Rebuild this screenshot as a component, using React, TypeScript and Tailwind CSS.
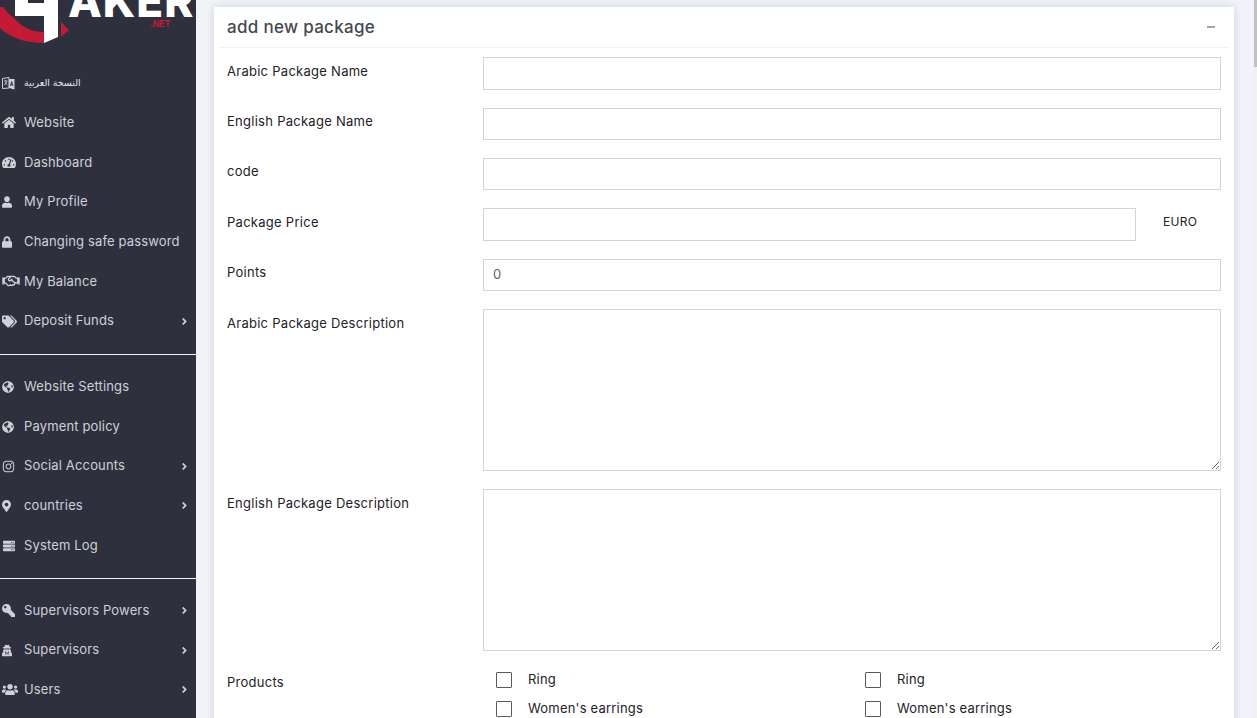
import React from 'react';
import {
  FaAngleRight,
  FaGlobeAmericas,
  FaHome,
  FaInstagram,
  FaKey,
  FaLock,
  FaMapMarkerAlt,
  FaRegHandshake,
  FaServer,
  FaTachometerAlt,
  FaTags,
  FaUser,
  FaUserSecret,
  FaUsers,
} from 'react-icons/fa';

const font = { fontFamily: 'Inter, "DejaVu Sans", sans-serif' };

type Item = { label: string; icon: React.ReactNode; arrow?: boolean; arabic?: boolean };

// two overlapping pages, the FA "language" glyph from the old icon set
const LanguageIcon = () => (
  <svg width="13" height="13" viewBox="0 0 13 13" className="shrink-0">
    <path d="M0.5 1.5 L7 0.5 V11 L0.5 11.5 Z" fill="none" stroke="#d0d2d9" strokeWidth="1" />
    <path d="M2 4 H5.5 M3.7 3 V4 M5 4 Q4.5 7 2 8 M3 5 Q4 7 5.5 8" fill="none" stroke="#d0d2d9" strokeWidth="0.8" />
    <path d="M7 2 H12.5 V12.5 L7 11 Z" fill="#d0d2d9" />
    <path d="M8.4 9 L9.7 4.5 L11 9 M8.9 7.6 H10.5" fill="none" stroke="#2e303e" strokeWidth="0.9" />
  </svg>
);

const groupOne: Item[] = [
  { label: 'النسخة العربية', icon: <LanguageIcon />, arabic: true },
  { label: 'Website', icon: <FaHome className="w-[14px] h-[13px] shrink-0" /> },
  { label: 'Dashboard', icon: <FaTachometerAlt className="w-[14px] h-[13px] shrink-0" /> },
  { label: 'My Profile', icon: <FaUser className="w-[10px] h-[12px] shrink-0" /> },
  { label: 'Changing safe password', icon: <FaLock className="w-[10px] h-[12px] shrink-0" /> },
  { label: 'My Balance', icon: <FaRegHandshake className="w-[18px] h-[14px] shrink-0" /> },
  { label: 'Deposit Funds', icon: <FaTags className="w-[15px] h-[13px] shrink-0" />, arrow: true },
];

const groupTwo: Item[] = [
  { label: 'Website Settings', icon: <FaGlobeAmericas className="w-[12px] h-[12px] shrink-0" /> },
  { label: 'Payment policy', icon: <FaGlobeAmericas className="w-[12px] h-[12px] shrink-0" /> },
  { label: 'Social Accounts', icon: <FaInstagram className="w-[13px] h-[13px] shrink-0" />, arrow: true },
  { label: 'countries', icon: <FaMapMarkerAlt className="w-[9px] h-[12px] shrink-0" />, arrow: true },
  { label: 'System Log', icon: <FaServer className="w-[14px] h-[12px] shrink-0" /> },
];

const groupThree: Item[] = [
  { label: 'Supervisors Powers', icon: <FaKey className="w-[13px] h-[13px] -scale-x-100 shrink-0" />, arrow: true },
  { label: 'Supervisors', icon: <FaUserSecret className="w-[10px] h-[13px] shrink-0" />, arrow: true },
  { label: 'Users', icon: <FaUsers className="w-[16px] h-[15px] shrink-0" />, arrow: true },
];

const SideRow = ({ item }: { item: Item }) => (
  <div className="h-[39.7px] flex items-center text-[#cfd1d8]">
    <span className="w-[22px] pl-[2px] flex justify-start shrink-0">{item.icon}</span>
    <span
      className={
        item.arabic
          ? 'ml-[2px] text-[9.5px] text-[#e4e5ea]'
          : 'ml-[2px] text-[13px] tracking-[0.15px] whitespace-nowrap'
      }
    >
      {item.label}
    </span>
    {item.arrow && <FaAngleRight className="ml-auto mr-[6px] w-[11px] h-[11px]" />}
  </div>
);

const Logo = () => (
  <div className="relative h-[63.2px] overflow-hidden">
    <svg width="196" height="46" viewBox="0 0 196 46" className="absolute left-0 top-0">
      <path d="M0 7 H3 Q 8 14 15 19 Q 26 32 44 32 V43 Q 16 43 0 28 Z" fill="#c51a36" />
      <path d="M15 0 H28 V3 H44 V0 H58 V37 L44 43 V16 H15 Z" fill="#ffffff" />
      <path d="M61 22 L69 30 L61 37 Z" fill="#c51a36" />
    </svg>
    <span className="absolute left-[68px] top-[-17px] text-[44px] leading-[36px] font-extrabold text-white tracking-[1px]">
      AKER
    </span>
    <span className="absolute left-[150px] top-[19px] text-[9px] leading-[9px] font-bold tracking-[-0.3px] text-[#c51a36]">
      .NET
    </span>
  </div>
);

const FormRow = ({
  label,
  children,
  tall,
}: {
  label: string;
  children: React.ReactNode;
  tall?: boolean;
}) => (
  <div className="flex mb-[18px]">
    <label className="w-[256px] shrink-0 pt-[4.4px] text-[13px] leading-[18px] tracking-[0.27px] text-[#1e2129]">
      {label}
    </label>
    <div className={tall ? 'flex-1 h-[162px]' : 'flex-1 h-[32.4px]'}>{children}</div>
  </div>
);

const inputClass = 'w-full h-full border border-[#d3d3df] bg-white px-[9px] pb-[1px] text-[13px] text-[#5f6168] outline-none';

const Check = ({ label }: { label: string }) => (
  <div className="h-[29px] flex items-center">
    <span className="w-[16px] h-[16px] border border-[#5a5a5a] rounded-[1px] bg-white shrink-0" />
    <span className="ml-[16px] text-[13px] tracking-[0.2px] text-[#1e2129]">{label}</span>
  </div>
);

export default function App() {
  return (
    <div className="h-[718px] w-full flex overflow-hidden bg-[#f0f3f7]" style={font}>
      {/* sidebar */}
      <aside className="w-[196px] h-full bg-[#2e303e] shrink-0 overflow-hidden">
        <Logo />
        {groupOne.map((item) => (
          <SideRow key={item.label} item={item} />
        ))}
        <div className="h-px bg-[#f2f2f2] mt-[13px] mb-[12px]" />
        {groupTwo.map((item) => (
          <SideRow key={item.label} item={item} />
        ))}
        <div className="h-px bg-[#f2f2f2] mt-[12.6px] mb-[11.6px]" />
        {groupThree.map((item) => (
          <SideRow key={item.label} item={item} />
        ))}
      </aside>

      {/* content */}
      <main className="flex-1 pl-[18px] pr-[20px] pt-[7px] overflow-hidden">
        <div className="bg-white shadow-[0_0_8px_rgba(70,85,110,0.2)] h-[760px]">
          <div className="mx-[5px] h-[41px] border-b border-[#f3f3f6] pl-[8px] pr-[14px] flex items-center justify-between">
            <h2 className="pt-[2px] text-[17px] font-medium tracking-[0.3px] text-[#45484f]">add new package</h2>
            <span className="w-[8px] h-[2px] bg-[#9da3ba]" />
          </div>
          <div className="pl-[13px] pr-[13px] pt-[9.2px]">
            <FormRow label="Arabic Package Name">
              <input className={inputClass} />
            </FormRow>
            <FormRow label="English Package Name">
              <input className={inputClass} />
            </FormRow>
            <FormRow label="code">
              <input className={inputClass} />
            </FormRow>
            <FormRow label="Package Price">
              <div className="flex h-full items-center">
                <input className="w-[653px] h-full border border-[#d3d3df] bg-white outline-none" />
                <span className="ml-[27px] mb-[6px] text-[12px] tracking-[0.3px] text-[#1e2129]">EURO</span>
              </div>
            </FormRow>
            <FormRow label="Points">
              <input className={inputClass} defaultValue="0" />
            </FormRow>
            <FormRow label="Arabic Package Description" tall>
              <textarea className="block w-full h-full border border-[#d3d3df] bg-white outline-none" />
            </FormRow>
            <FormRow label="English Package Description" tall>
              <textarea className="block w-full h-full border border-[#d3d3df] bg-white outline-none" />
            </FormRow>
            <div className="flex">
              <label className="w-[256px] shrink-0 pt-[4px] text-[13px] leading-[18px] tracking-[0.27px] text-[#1e2129]">
                Products
              </label>
              <div className="flex-1 pl-[13px] grid grid-cols-[369px_1fr] -mt-[4px]">
                <Check label="Ring" />
                <Check label="Ring" />
                <Check label="Women's earrings" />
                <Check label="Women's earrings" />
              </div>
            </div>
          </div>
        </div>
      </main>

      {/* scrollbar */}
      <div className="w-[3px] h-full bg-[#f1f1f1] shrink-0">
        <div className="h-[67px] bg-[#c1c1c1]" />
      </div>
    </div>
  );
}
